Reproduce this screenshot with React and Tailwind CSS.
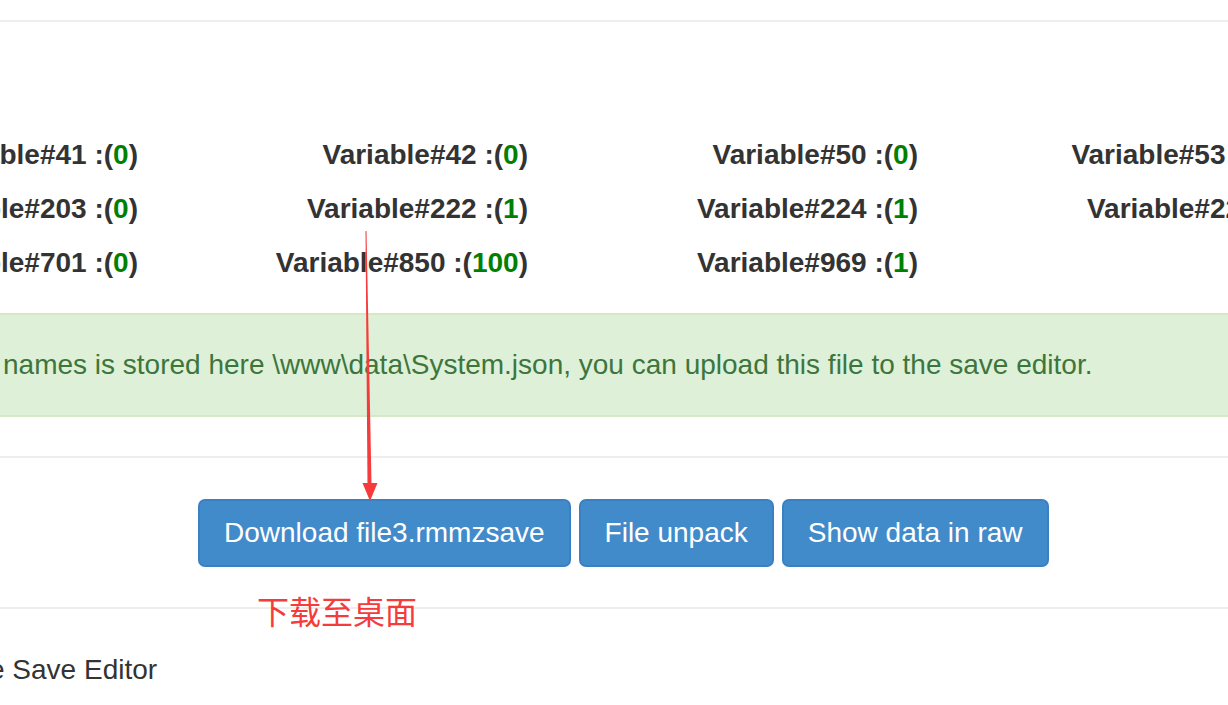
import { useMemo } from "react";

// Variable grid: four right-aligned columns of 390px, first one partly off screen.
const rows = [
    [["41", "0"], ["42", "0"], ["50", "0"], ["53", "100"]],
    [["203", "0"], ["222", "1"], ["224", "1"], ["225", "1"]],
    [["701", "0"], ["850", "100"], ["969", "1"], null],
];

const buttons = ["Download file3.rmmzsave", "File unpack", "Show data in raw"];

function VariableCell({ item }) {
    if (!item) return <div />;
    const [id, value] = item;

    return (
        <div className="flex items-center justify-end whitespace-nowrap text-[28px] font-bold text-[#333]">
            Variable#{id} :(<span className="text-[#008000]">{value}</span>)
        </div>
    );
}

function Arrow() {
    return (
        <svg
            className="pointer-events-none absolute left-0 top-0"
            width="1228"
            height="705"
            viewBox="0 0 1228 705"
        >
            <polygon points="365.5,231 366.5,231 371.5,484 367.5,484" fill="#f53b3b" />
            <polygon points="362.5,483 377.5,483 370,501" fill="#f53b3b" />
        </svg>
    );
}

export default function App() {
    const cells = useMemo(() => rows.flat(), []);

    return (
        <div className="relative h-[705px] w-[1228px] overflow-hidden bg-white font-['Liberation_Sans',Arial,sans-serif] text-[#333]">
            <div className="pt-[20px]">
                <div className="h-[2px] bg-[#eeeeee]" />

                <div className="ml-[-252px] mt-[106px] grid w-[1560px] grid-cols-[repeat(4,390px)] auto-rows-[54px]">
                    {cells.map((item, index) => (
                        <VariableCell key={index} item={item} />
                    ))}
                </div>

                <div className="mt-[23px] flex h-[104px] items-center border-y-2 border-[#d6e9c6] bg-[#dff0d8] pl-[3px] text-[28px] whitespace-nowrap text-[#3c763d]">
                    names is stored here \www\data\System.json, you can upload this file to the save editor.
                </div>

                <div className="mt-[39px] h-[2px] bg-[#eeeeee]" />

                <div className="mt-[41px] flex gap-[8px] pl-[198px]">
                    {buttons.map((label) => (
                        <button
                            key={label}
                            type="button"
                            className="h-[68px] whitespace-nowrap rounded-[7px] border-2 border-[#3b80c0] bg-[#428bca] px-[24px] text-[28px] text-white"
                        >
                            {label}
                        </button>
                    ))}
                </div>

                <div className="mt-[40px] h-[2px] bg-[#eeeeee]" />

                <p className="ml-[-11px] mt-[41px] text-[28px] leading-[40px] whitespace-nowrap text-[#333]">
                    e Save Editor
                </p>
            </div>

            <span className="absolute left-[257px] top-[590px] font-['Noto_Sans_CJK_SC',sans-serif] text-[32px] leading-[40px] text-[#f53b3b]">
                下载至桌面
            </span>

            <Arrow />
        </div>
    );
}
